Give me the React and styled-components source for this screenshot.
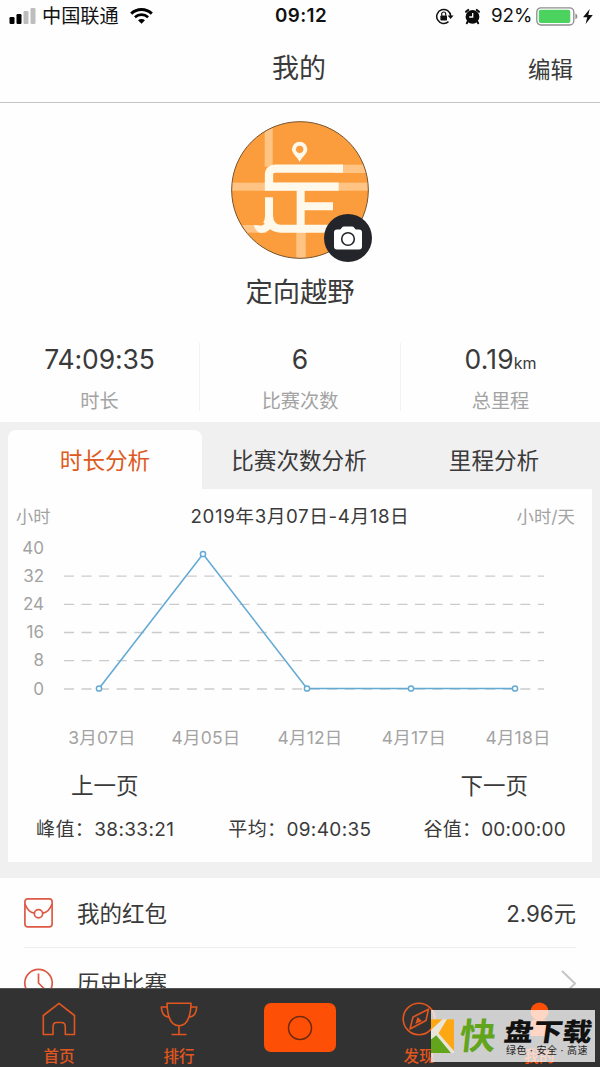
import React from 'react';
import styled, { createGlobalStyle } from 'styled-components';

const GlobalStyle = createGlobalStyle`
  * { box-sizing: border-box; }
  body {
    margin: 0;
    background: #fefefe;
    font-family: Inter, "Noto Sans CJK SC", sans-serif;
    font-weight: 400;
    color: #333;
  }
`;

const Screen = styled.div`
  position: relative;
  width: 600px;
  height: 1067px;
  overflow: hidden;
  display: flex;
  flex-direction: column;
  background: #fefefe;
`;

const Text = styled.span`
  display: block;
  white-space: nowrap;
  line-height: 1;
  font-size: ${(p) => p.$size}px;
  color: ${(p) => p.$color || '#3a3a3a'};
  letter-spacing: ${(p) => p.$spacing || 0}px;
  font-weight: ${(p) => p.$weight || 'inherit'};
`;

const StatusBar = styled.div`
  flex: none;
  height: 33px;
  display: grid;
  grid-template-columns: 1fr auto 1fr;
  align-items: center;
  padding: 0 7px 0 9px;
`;

const StatusGroup = styled.div`
  display: flex;
  align-items: center;
  justify-content: ${(p) => (p.$end ? 'flex-end' : 'flex-start')};
  gap: ${(p) => p.$gap}px;
`;

const Carrier = styled.div`
  padding: 1px 5px 0 0;
`;

const Header = styled.header`
  flex: none;
  height: 70px;
  display: grid;
  grid-template-columns: 1fr auto 1fr;
  align-items: center;
  padding: 2px 27px 0 25px;
  border-bottom: 1px solid #c4c4c4;
`;

const EditButton = styled.div`
  justify-self: end;
  padding-top: 3px;
`;

const Profile = styled.section`
  flex: none;
  height: 240px;
  display: flex;
  flex-direction: column;
  align-items: center;
  padding-top: 18px;
  gap: 20px;
`;

const Avatar = styled.div`
  position: relative;
  width: 138px;
  height: 138px;
  & > svg { display: block; }
`;

const CameraBadge = styled.div`
  position: absolute;
  left: 93px;
  top: 93px;
  width: 48px;
  height: 48px;
  border-radius: 50%;
  background: #24252b;
  display: flex;
  align-items: center;
  justify-content: center;
`;

const Stats = styled.section`
  flex: none;
  height: 79px;
  padding-bottom: 11px;
  display: grid;
  grid-template-columns: 199px 201px 200px;
`;

const Stat = styled.div`
  display: flex;
  flex-direction: column;
  align-items: center;
  justify-content: space-between;
  padding: 3px 0 0;
  border-left: ${(p) => (p.$first ? '0' : '1px solid #f2f2f2')};
`;

const StatValue = styled.div`
  display: flex;
  align-items: baseline;
`;

const Analysis = styled.section`
  flex: none;
  height: 456px;
  padding: 8px 8px 16px;
  background: #f0f0f0;
  display: flex;
  flex-direction: column;
`;

const Tabs = styled.div`
  flex: none;
  height: 59px;
  display: grid;
  grid-template-columns: 194px 194px 196px;
`;

const Tab = styled.div`
  display: flex;
  align-items: center;
  justify-content: center;
  padding-top: 3px;
  border-radius: 8px 8px 0 0;
  background: ${(p) => (p.$active ? '#fefefe' : 'transparent')};
`;

const Card = styled.div`
  flex: 1;
  display: flex;
  flex-direction: column;
  background: #fefefe;
`;

const CardHead = styled.div`
  height: 54px;
  display: grid;
  grid-template-columns: 1fr auto 1fr;
  align-items: center;
  padding: 2px 17px 0 8px;
  & > :nth-child(2) { padding-left: 9px; }
  & > :last-child { justify-self: end; }
`;

const ChartRow = styled.div`
  height: 170px;
  display: flex;
`;

const YAxis = styled.div`
  width: 36px;
  display: flex;
  flex-direction: column;
  align-items: flex-end;
  margin-top: -9px;
`;

const YLabel = styled.div`
  height: 28.2px;
  display: flex;
  align-items: center;
`;

const Plot = styled.svg`
  display: block;
  margin-left: 20px;
`;

const XAxis = styled.div`
  height: 50px;
  padding: 0 22px 0 42px;
  display: grid;
  grid-template-columns: repeat(5, 104px);
  justify-items: center;
  align-items: center;
`;

const Pager = styled.div`
  height: 47px;
  display: flex;
  justify-content: space-between;
  align-items: center;
  padding: 0 64px 0 63px;
`;

const Summary = styled.div`
  height: 38px;
  display: flex;
  justify-content: space-between;
  align-items: center;
  padding: 0 26px 0 28px;
  & > :nth-child(2) { padding-left: 2px; }
`;

const List = styled.section`
  flex: 1;
  min-height: 0;
  overflow: hidden;
  padding: 0 24px;
`;

const Row = styled.div`
  height: 70px;
  display: flex;
  align-items: center;
  gap: 24px;
  padding-top: 1px;
  border-bottom: 1px solid #eee;
  & > span { padding-top: 3px; }
  & > :last-child { margin-left: auto; }
`;

const TabBar = styled.nav`
  flex: none;
  height: 79px;
  background: #323232;
  border-top: 1px solid #555;
  display: grid;
  grid-template-columns: repeat(5, 120px);
`;

const NavItem = styled.div`
  display: flex;
  flex-direction: column;
  align-items: center;
  padding: ${(p) => p.$top || 13}px 2px 0 0;
  gap: 13px;
`;

const RecordButton = styled.div`
  width: 72px;
  height: 49px;
  margin-left: 2px;
  border-radius: 7px;
  background: #fd4f05;
  display: flex;
  align-items: center;
  justify-content: center;
`;

const Watermark = styled.div`
  position: absolute;
  left: 431px;
  top: 1010px;
  width: 164px;
  height: 52px;
  display: flex;
  overflow: hidden;
  background: rgba(255, 255, 255, 0.76);
`;

const WatermarkQuick = styled.div`
  width: 48px;
  padding-top: 8px;
  display: flex;
  justify-content: center;
  transform: skewX(-6deg);
`;

const WatermarkWords = styled.div`
  flex: 1;
  display: flex;
  flex-direction: column;
  padding: 9px 0 0 4px;
  gap: 3px;
`;

const Slanted = styled.div`
  transform: skewX(-8deg) scaleY(0.86);
  transform-origin: left top;
  height: 23px;
`;

const ORANGE = '#e2561f';
const GREY = '#a3a3a3';

const SignalIcon = () => (
  <svg width="27" height="16" viewBox="0 0 27 16">
    <rect x="0.5" y="9" width="5" height="7" rx="1.2" fill="#000" />
    <rect x="7.5" y="6" width="5" height="10" rx="1.2" fill="#000" />
    <rect x="14.5" y="3" width="5" height="13" rx="1.2" fill="#bdbdbd" />
    <rect x="21.5" y="0" width="5" height="16" rx="1.2" fill="#bdbdbd" />
  </svg>
);

const WifiIcon = () => (
  <svg width="23" height="16" viewBox="0 0 23 16" fill="none" stroke="#000">
    <path d="M1.2 5.7 C7 .1 16 .1 21.8 5.7" strokeWidth="3" />
    <path d="M4.9 9.3 C8.7 5.7 14.3 5.7 18.1 9.3" strokeWidth="2.6" />
    <path d="M11.5 15.8 L8 12.3 C10 10.5 13 10.5 15 12.3 Z" fill="#000" stroke="none" />
  </svg>
);

const RotationLockIcon = () => (
  <svg width="19" height="17" viewBox="0 0 19 17" fill="none" stroke="#111">
    <path d="M15.7 8 A7 7 0 1 0 13.5 13.6" strokeWidth="1.5" />
    <path d="M12.6 7.4 H18.6 L15.6 11 Z" fill="#111" stroke="none" />
    <rect x="5.4" y="7.5" width="6.6" height="5" rx=".7" fill="#111" stroke="none" />
    <path d="M6.7 7.8 V6 a2 2 0 0 1 4 0 V7.8" strokeWidth="1.2" />
  </svg>
);

const AlarmIcon = () => (
  <svg width="17" height="17" viewBox="0 0 17 17">
    <circle cx="8.5" cy="8.8" r="6.9" fill="#0b0b0b" />
    <path d="M2 3.8 L4.2 1.9 M15 3.8 L12.8 1.9 M3.8 13.5 L2.8 15.2 M13.2 13.5 L14.2 15.2" stroke="#0b0b0b" strokeWidth="2" strokeLinecap="round" />
    <path d="M8.7 5 V9 H5.2" stroke="#fff" strokeWidth="1.3" fill="none" />
  </svg>
);

const BatteryIcon = () => (
  <svg width="42" height="19" viewBox="0 0 42 19">
    <rect x="0.8" y="0.8" width="37" height="17.2" rx="4.2" fill="#fff" stroke="#8d8d8d" strokeWidth="1.3" />
    <rect x="2.8" y="2.8" width="31.5" height="13.2" rx="2" fill="#4bd25f" />
    <path d="M39.4 6.5 C42 7.5 42 11.3 39.4 12.3 Z" fill="#8d8d8d" />
  </svg>
);

const BoltIcon = () => (
  <svg width="10" height="15" viewBox="0 0 10 15">
    <path d="M6.7 0 L0 8.2 H4.2 L2.6 15 L9.8 6 H5.3 Z" fill="#111" />
  </svg>
);

const AvatarArt = () => (
  <svg width="138" height="138" viewBox="33 33 414 414">
    <defs>
      <clipPath id="avatarClip"><circle cx="240" cy="240" r="205" /></clipPath>
    </defs>
    <g clipPath="url(#avatarClip)">
      <rect x="30" y="30" width="420" height="420" fill="#fb9d3c" />
      <g fill="#ffc384">
        <rect x="134" y="30" width="24" height="140" />
        <rect x="30" y="218" width="420" height="24" />
        <rect x="340" y="164" width="110" height="25" />
        <rect x="229" y="350" width="28" height="100" />
        <rect x="30" y="345" width="110" height="23" />
      </g>
      <g fill="none" stroke="#fff9ec">
        <path d="M369 176 H166 Q147 176 147 194 V230 H356" strokeWidth="25" />
        <path d="M242 230 V356 M242 289 H339" strokeWidth="24" />
        <path d="M147 262 V318 Q147 334 139 344" strokeWidth="24" />
        <path d="M147 318 Q150 356 182 356 H330" strokeWidth="24" />
      </g>
      <path d="M101 346 Q116 344 122 349 Q134 345 140 330 L160 345 Q146 369 122 369 Q108 366 101 346 Z" fill="#fff9ec" />
      <path d="M239 156 C231 140 216 131 216 118 A23 23 0 0 1 262 118 C262 131 247 140 239 156 Z" fill="#fff9ec" />
      <circle cx="239" cy="118" r="11" fill="#fb9d3c" />
    </g>
    <circle cx="240" cy="240" r="205" fill="none" stroke="#77532d" strokeWidth="3" />
  </svg>
);

const CameraIcon = () => (
  <svg width="28" height="24" viewBox="0 0 28 24">
    <path d="M3 3.5 H6.3 L8 1.4 Q8.6 .5 10 .5 H18 Q19.4 .5 20 1.4 L21.7 3.5 H25 Q28 3.5 28 6.5 V20.5 Q28 23.5 25 23.5 H3 Q0 23.5 0 20.5 V6.5 Q0 3.5 3 3.5 Z" fill="#fff" />
    <circle cx="14" cy="13" r="6.3" fill="#fff" stroke="#24252b" strokeWidth="1.6" />
  </svg>
);

const EnvelopeIcon = () => (
  <svg width="29" height="30" viewBox="0 0 29 30" fill="none" stroke="#dc5a46" strokeWidth="1.7">
    <rect x="0.9" y="0.9" width="27.2" height="28" rx="2.8" />
    <path d="M1 6 C3 11.5 6 14.5 10.3 15.2 M28 6 C26 11.5 23 14.5 18.7 15.2" />
    <circle cx="14.5" cy="15.7" r="4.1" />
  </svg>
);

const ClockIcon = () => (
  <svg width="29" height="30" viewBox="0 0 29 30" fill="none" stroke="#dc5a46" strokeWidth="1.7">
    <circle cx="14.5" cy="15" r="13.7" />
    <path d="M14.5 5.5 V15 L20 20.5" />
  </svg>
);

const ChevronIcon = () => (
  <svg width="15" height="27" viewBox="0 0 15 27" fill="none" stroke="#c6c6c6" strokeWidth="2">
    <path d="M1 1 L14 13.5 L1 26" />
  </svg>
);

const HomeIcon = () => (
  <svg width="34" height="34" viewBox="0 0 34 34" fill="none" stroke={ORANGE} strokeWidth="1.6" strokeLinejoin="round">
    <path d="M17 1.3 L32.5 13.5 V32.5 H23.3 V25 Q23.3 20.5 19.5 20.5 H14.5 Q11 20.5 11 25 V32.5 H1.3 V13.5 Z" />
  </svg>
);

const TrophyIcon = () => (
  <svg width="38" height="34" viewBox="0 0 38 34" fill="none" stroke={ORANGE} strokeWidth="1.6" strokeLinejoin="round">
    <path d="M7 1.3 H31 C30.7 13 28.5 23.5 19 23.8 C9.5 23.5 7.3 13 7 1.3 Z" />
    <path d="M7.2 5 H1.3 C1.5 10.5 4 14.6 9 15.3 M30.8 5 H36.7 C36.5 10.5 34 14.6 29 15.3" />
    <path d="M19 24 V32.3 M11.5 32.5 H26.5" />
  </svg>
);

const CompassIcon = () => (
  <svg width="34" height="34" viewBox="0 0 34 34" fill="none" stroke={ORANGE} strokeWidth="1.6" strokeLinejoin="round">
    <circle cx="17" cy="17" r="15.8" />
    <path d="M26.5 7.2 L24 18.5 L8 27 L11 15 Z" />
    <path d="M15.5 15 L20 19 L13.3 22 Z" fill={ORANGE} stroke="none" />
  </svg>
);

const PersonIcon = () => (
  <svg width="36" height="34" viewBox="0 0 36 34" fill="#fd4f05">
    <circle cx="18.5" cy="9.5" r="9" />
    <path d="M9.5 34 V19 Q18.5 15 27.5 19 V34 Z" />
  </svg>
);

const WatermarkLogo = () => (
  <svg width="23" height="52" viewBox="0 0 23 52">
    <path d="M0 9.3 H23 V43 H0 Z" fill="#e9e5da" />
    <path d="M0 9.3 H11.5 L0 20 Z" fill="#fda714" />
    <path d="M16 9.3 H23 V41 L7.5 23.2 Z" fill="#fda714" />
    <path d="M0 29.5 L5.3 25.3 L20 43 H0 Z" fill="#62a51d" />
  </svg>
);

const gridLines = [28.2, 56.4, 84.5, 112.7, 141];
const points = [[35, 140.5], [139, 6], [243, 140.5], [347, 140.5], [451, 140.5]];

export default function App() {
  return (
    <>
      <GlobalStyle />
      <Screen>
        <StatusBar>
          <StatusGroup $gap={6}>
            <SignalIcon />
            <Carrier><Text $size={19.2} $color="#111">中国联通</Text></Carrier>
            <WifiIcon />
          </StatusGroup>
          <Text $size={18.8} $weight={600} $color="#111" $spacing={0.4}>09:12</Text>
          <StatusGroup $end $gap={3.5}>
            <StatusGroup $gap={10}>
              <RotationLockIcon />
              <AlarmIcon />
              <Text $size={18.8} $color="#111">92%</Text>
            </StatusGroup>
            <StatusGroup $gap={5}>
              <BatteryIcon />
              <BoltIcon />
            </StatusGroup>
          </StatusGroup>
        </StatusBar>

        <Header>
          <span />
          <Text $size={27}>我的</Text>
          <EditButton><Text $size={22.5}>编辑</Text></EditButton>
        </Header>

        <Profile>
          <Avatar>
            <AvatarArt />
            <CameraBadge><CameraIcon /></CameraBadge>
          </Avatar>
          <Text $size={27.3}>定向越野</Text>
        </Profile>

        <Stats>
          <Stat $first>
            <StatValue><Text $size={26.5} $spacing={-0.1}>74:09:35</Text></StatValue>
            <Text $size={19.2} $color={GREY}>时长</Text>
          </Stat>
          <Stat>
            <StatValue><Text $size={26.5}>6</Text></StatValue>
            <Text $size={19.2} $color={GREY}>比赛次数</Text>
          </Stat>
          <Stat>
            <StatValue>
              <Text $size={26.5} $spacing={0.2}>0.19</Text>
              <Text $size={16}>km</Text>
            </StatValue>
            <Text $size={19.2} $color={GREY}>总里程</Text>
          </Stat>
        </Stats>

        <Analysis>
          <Tabs>
            <Tab $active><Text $size={22.6} $color="#dd5a20">时长分析</Text></Tab>
            <Tab><Text $size={22.6}>比赛次数分析</Text></Tab>
            <Tab><Text $size={22.6}>里程分析</Text></Tab>
          </Tabs>
          <Card>
            <CardHead>
              <Text $size={17.2} $color={GREY}>小时</Text>
              <Text $size={18.7} $spacing={0.6}>2019年3月07日-4月18日</Text>
              <Text $size={17.4} $color={GREY}>小时/天</Text>
            </CardHead>
            <ChartRow>
              <YAxis>
                {[40, 32, 24, 16, 8, 0].map((v) => (
                  <YLabel key={v}><Text $size={17} $color={GREY}>{v}</Text></YLabel>
                ))}
              </YAxis>
              <Plot width="484" height="170" viewBox="0 -5 484 170">
                {gridLines.map((y) => (
                  <line key={y} x1="0" x2="480" y1={y} y2={y} stroke="#cbcbcb" strokeWidth="1.3" strokeDasharray="10 7.55" />
                ))}
                <polyline points={points.map((p) => p.join(',')).join(' ')} fill="none" stroke="#64aad5" strokeWidth="1.6" />
                {points.map(([x, y]) => (
                  <circle key={x} cx={x} cy={y} r="2.6" fill="#fff" stroke="#64aad5" strokeWidth="1.5" />
                ))}
              </Plot>
            </ChartRow>
            <XAxis>
              {['3月07日', '4月05日', '4月12日', '4月17日', '4月18日'].map((d) => (
                <Text key={d} $size={17.5} $spacing={0.2} $color={GREY}>{d}</Text>
              ))}
            </XAxis>
            <Pager>
              <Text $size={22.5}>上一页</Text>
              <Text $size={22.5}>下一页</Text>
            </Pager>
            <Summary>
              <Text $size={19} $spacing={0.38}>峰值：38:33:21</Text>
              <Text $size={19} $spacing={0.35}>平均：09:40:35</Text>
              <Text $size={19} $spacing={0.25}>谷值：00:00:00</Text>
            </Summary>
          </Card>
        </Analysis>

        <List>
          <Row>
            <EnvelopeIcon />
            <Text $size={22.5}>我的红包</Text>
            <Text $size={22.3}>2.96元</Text>
          </Row>
          <Row>
            <ClockIcon />
            <Text $size={22.5}>历史比赛</Text>
            <ChevronIcon />
          </Row>
        </List>

        <TabBar>
          <NavItem><HomeIcon /><Text $size={15.5} $weight={500} $color={ORANGE}>首页</Text></NavItem>
          <NavItem><TrophyIcon /><Text $size={15.5} $weight={500} $color={ORANGE}>排行</Text></NavItem>
          <NavItem $top={14}><RecordButton>
            <svg width="26" height="26" viewBox="0 0 26 26"><circle cx="13" cy="13" r="11.5" fill="none" stroke="#6b2a10" strokeWidth="1.5" /></svg>
          </RecordButton></NavItem>
          <NavItem><CompassIcon /><Text $size={15.5} $weight={500} $color={ORANGE}>发现</Text></NavItem>
          <NavItem><PersonIcon /><Text $size={15.5} $weight={500} $color="#fd4f05">我的</Text></NavItem>
        </TabBar>

        <Watermark>
          <WatermarkLogo />
          <WatermarkQuick><Text $size={36} $weight={700} $color="#62a51d">快</Text></WatermarkQuick>
          <WatermarkWords>
            <Slanted><Text $size={29.3} $weight={900} $color="#111">盘下载</Text></Slanted>
            <Text $size={10} $weight={400} $color="#222" $spacing={0.4}>绿色 · 安全 · 高速</Text>
          </WatermarkWords>
        </Watermark>
      </Screen>
    </>
  );
}
